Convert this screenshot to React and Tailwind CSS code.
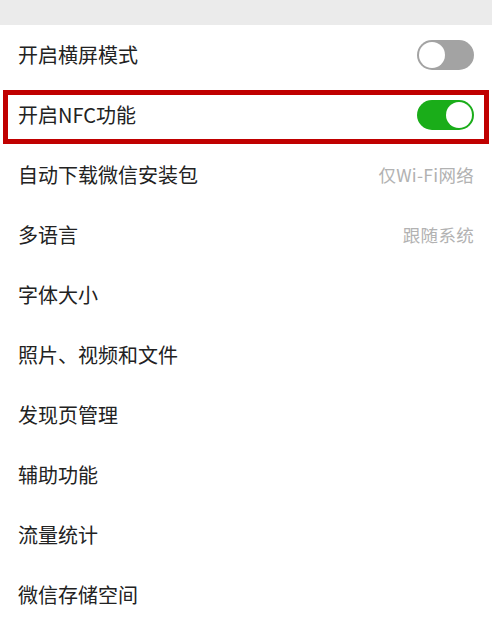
import React from 'react';

function Toggle({ on }) {
  return (
    <div
      className={`flex items-center w-[57px] h-[30px] rounded-full p-[2px] ${
        on ? 'bg-[#1aad19] justify-end' : 'bg-[#a3a3a3] justify-start'
      }`}
    >
      <div className="w-[26px] h-[26px] rounded-full bg-white" />
    </div>
  );
}

const rows = [
  { label: '开启横屏模式', toggle: false },
  { label: '开启NFC功能', toggle: true, marked: true },
  { label: '自动下载微信安装包', value: '仅Wi-Fi网络' },
  { label: '多语言', value: '跟随系统' },
  { label: '字体大小' },
  { label: '照片、视频和文件' },
  { label: '发现页管理' },
  { label: '辅助功能' },
  { label: '流量统计' },
  { label: '微信存储空间' },
];

export default function App() {
  return (
    <div
      className="w-[492px] h-[626px] bg-white overflow-hidden"
      style={{ fontFamily: '"Noto Sans CJK SC", "Noto Sans", sans-serif' }}
    >
      <div className="h-[25px] bg-[#ebebeb]" />
      {rows.map((row) => (
        <div key={row.label} className="relative h-[60px] flex items-center justify-between pl-[18px] pr-[18px]">
          <span className="text-[20px] leading-none text-[#222222]">{row.label}</span>
          {row.toggle !== undefined && <Toggle on={row.toggle} />}
          {row.value && (
            <span className="text-[17.5px] tracking-[0.3px] leading-none text-[#b2b2b2]">{row.value}</span>
          )}
          {row.marked && (
            <div className="absolute top-[5px] bottom-[1px] left-[3px] right-[3px] border-[5px] border-[#c00000] pointer-events-none" />
          )}
        </div>
      ))}
    </div>
  );
}
